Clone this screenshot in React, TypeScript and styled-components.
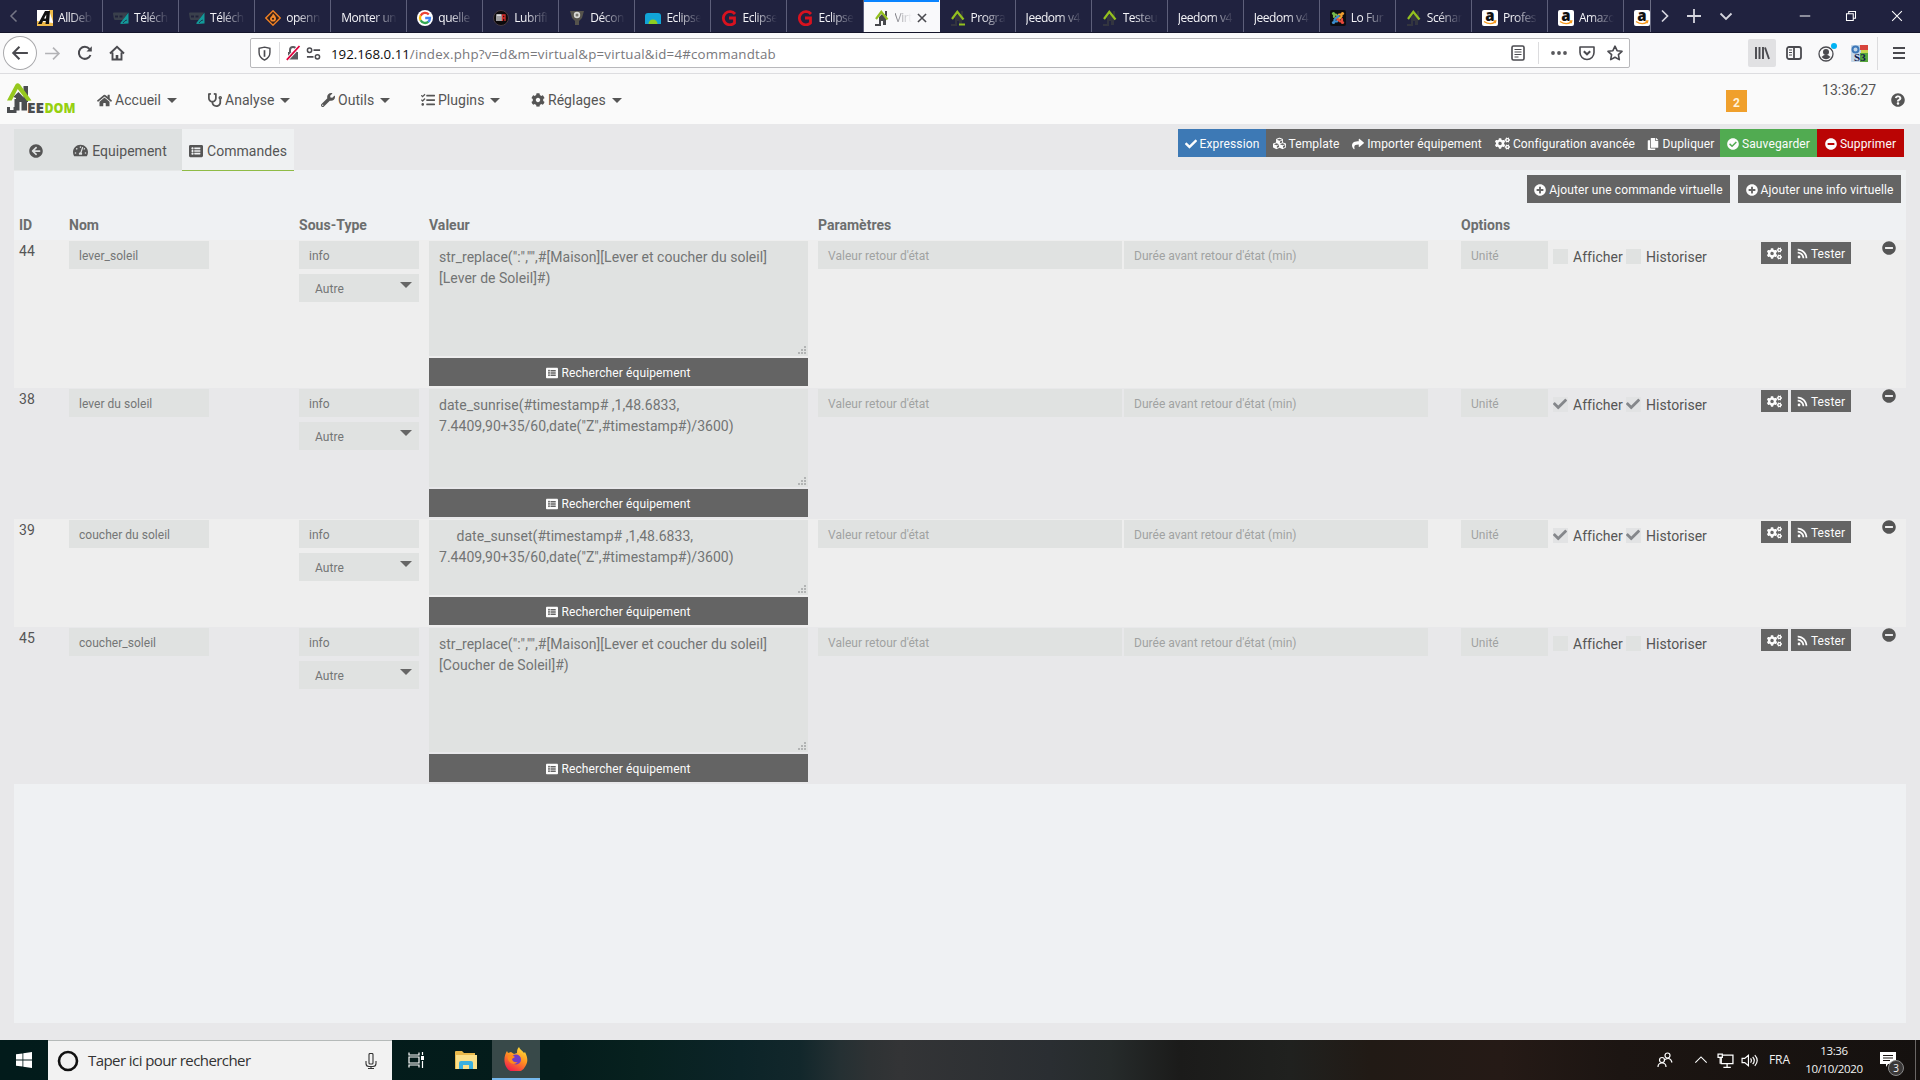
import React from "react";
import styled, { createGlobalStyle } from "styled-components";
import {
  FaHome, FaStethoscope, FaWrench, FaTasks, FaCog, FaTachometerAlt, FaListAlt, FaArrowCircleLeft,
  FaCheck, FaCubes, FaShare, FaCogs, FaCopy, FaCheckCircle, FaMinusCircle, FaPlusCircle, FaRss,
  FaQuestionCircle,
} from "react-icons/fa";

const Global = createGlobalStyle`
  * { box-sizing: border-box; }
  body { margin: 0; background: #e8e8ea; overflow: hidden; }
  svg { display: block; flex: none; }
`;

const ui = `"Open Sans", "Noto Sans", sans-serif`;

const Screen = styled.div`
  width: 1920px;
  height: 1080px;
  display: flex;
  flex-direction: column;
  overflow: hidden;
  font-family: Roboto, sans-serif;
  font-size: 14px;
  letter-spacing: 0.03px;
  color: #555;
`;

/* ---------- Browser tab strip ---------- */
const TabStrip = styled.div`
  height: 33px;
  flex: none;
  display: flex;
  background: #20223f;
  border-bottom: 1px solid #14152b;
  font: 12px ${ui};
  color: #f4f4f8;
`;
const Slot = styled.div<{ w: number; dim?: boolean }>`
  width: ${(p) => p.w}px;
  height: 100%;
  flex: none;
  display: flex;
  align-items: center;
  justify-content: center;
  opacity: ${(p) => (p.dim ? 0.45 : 1)};
`;
const TabList = styled.div`
  width: 1624px;
  flex: none;
  display: flex;
  overflow: hidden;
  border-right: 1px solid #6c6e85;
`;
const BrowserTab = styled.div<{ active?: boolean }>`
  width: 76.05px;
  height: 33px;
  flex: none;
  display: flex;
  align-items: center;
  padding: 2px ${(p) => (p.active ? 12 : 9)}px 0 10px;
  gap: 5px;
  border-right: 1px solid ${(p) => (p.active ? "#f9f9fb" : "#5d5f7a")};
  background: ${(p) => (p.active ? "#f9f9fb" : "transparent")};
  box-shadow: ${(p) => (p.active ? "inset 0 2px #0a84ff" : "none")};
  color: ${(p) => (p.active ? "#4a4a52" : "inherit")};
`;
const TabLabel = styled.span`
  flex: 1;
  min-width: 0;
  white-space: nowrap;
  letter-spacing: -0.45px;
  mask-image: linear-gradient(to right, #000 calc(100% - 24px), transparent);
`;
const Spacer = styled.div`
  flex: 1;
`;

/* ---------- Browser toolbar ---------- */
const NavBar = styled.div`
  height: 41px;
  flex: none;
  display: flex;
  align-items: center;
  padding-left: 3px;
  background: #f9f9fa;
  border-bottom: 1px solid #dddde0;
`;
const BackButton = styled.div`
  width: 34px;
  height: 34px;
  border-radius: 50%;
  border: 1px solid #a9a9ac;
  background: #fff;
  display: flex;
  align-items: center;
  justify-content: center;
`;
const AddressBar = styled.div`
  width: 1382px;
  height: 30px;
  margin-left: 117px;
  display: flex;
  align-items: center;
  background: #fff;
  border: 1px solid #b8b8bb;
  border-radius: 2px;
`;
const Divider = styled.div<{ h: number }>`
  width: 1px;
  height: ${(p) => p.h}px;
  background: #dcdcde;
`;
const Url = styled.div`
  margin-left: 10px;
  font: 13.3px ${ui};
  letter-spacing: 0.2px;
  color: #78787c;
  padding-top: 2px;
  b { font-weight: 400; color: #0c0c0d; letter-spacing: 0; }
`;
const LibraryButton = styled(Slot)`
  height: 28px;
  background: #e1e1e3;
  border-radius: 2px;
`;

/* ---------- Jeedom header ---------- */
const Header = styled.header`
  height: 50px;
  flex: none;
  display: flex;
  align-items: center;
  background: #fafafa;
  padding-left: 7px;
`;
const Menu = styled.nav`
  display: flex;
  margin-left: 21px;
`;
const MenuItem = styled.div<{ w: number }>`
  width: ${(p) => p.w}px;
  display: flex;
  align-items: center;
  gap: 3px;
  padding-top: 2px;
`;
const Caret = styled.i<{ size?: number }>`
  border: ${(p) => p.size ?? 5}px solid transparent;
  border-top: ${(p) => (p.size ?? 5) + 0.5}px solid currentColor;
  border-bottom: 0;
`;
const MenuCaret = styled(Caret)`
  margin-left: 3px;
`;
const Badge = styled.div`
  width: 21px;
  height: 22px;
  margin: 4px 75px 0 0;
  display: flex;
  align-items: center;
  justify-content: center;
  padding-top: 3px;
  background: #f0a02c;
  color: #fff3dc;
  font-size: 12px;
  font-weight: 700;
`;
const Clock = styled.div`
  width: 69px;
  margin-top: -18px;
`;
const HelpIcon = styled.div`
  margin: 2px 15px 0 0;
`;

/* ---------- Page ---------- */
const Page = styled.main`
  height: 916px;
  flex: none;
  padding: 5px 14px 17px;
  background: #e8e8ea;
`;
const PageTop = styled.div`
  display: flex;
  justify-content: space-between;
  height: 41px;
`;
const PageTabs = styled.div`
  display: flex;
  height: 42px;
`;
const PageTab = styled.div<{ w: number; active?: boolean }>`
  width: ${(p) => p.w}px;
  height: 42px;
  display: flex;
  align-items: center;
  justify-content: center;
  gap: 4px;
  padding-top: 2px;
  background: ${(p) => (p.active ? "#eff1f2" : "#dee1e1")};
  border-bottom: 1px solid ${(p) => (p.active ? "#8fbb45" : "#e6e8e8")};
  position: relative;
`;
const Actions = styled.div`
  display: flex;
  margin-right: 2px;
`;
const Button = styled.button<{ w?: number; h?: number; bg?: string }>`
  width: ${(p) => (p.w ? `${p.w}px` : "100%")};
  height: ${(p) => p.h ?? 28}px;
  border: 0;
  padding: 1px 0 0;
  display: flex;
  align-items: center;
  justify-content: center;
  gap: 3px;
  white-space: nowrap;
  background: ${(p) => p.bg ?? "#646464"};
  color: #fcfcfc;
  font: 400 12px Roboto, sans-serif;
  letter-spacing: 0.12px;
`;
const Panel = styled.section`
  height: 853px;
  background: #eff1f3;
`;
const AddBar = styled.div`
  display: flex;
  justify-content: flex-end;
  gap: 8px;
  height: 40px;
  padding: 5px 5px 0 0;
`;
const columns = "50px 230px 130px 389px 643px 300px 1fr";
const HeadRow = styled.div`
  display: grid;
  grid-template-columns: ${columns};
  height: 30px;
  line-height: 30px;
  padding-left: 5px;
  font-weight: 700;
  color: #6c6e6e;
`;
const Row = styled.div<{ h: number; alt?: boolean }>`
  display: grid;
  grid-template-columns: ${columns};
  height: ${(p) => p.h}px;
  padding: 1px 0 0 5px;
  background: ${(p) => (p.alt ? "#e8e8ea" : "#eeeeee")};
`;
const IdCell = styled.div`
  line-height: 20px;
`;
const Field = styled.div<{ w: number; muted?: boolean }>`
  width: ${(p) => p.w}px;
  height: 28px;
  padding: 2px 10px 0;
  line-height: 27px;
  font-size: 12px;
  background: #e0e2e1;
  color: ${(p) => (p.muted ? "#a0a2a2" : "#747676")};
`;
const SelectField = styled(Field)`
  display: flex;
  justify-content: space-between;
  margin-top: 5px;
  padding: 2px 7px 0 16px;
`;
const SelectCaret = styled(Caret)`
  margin-top: 6px;
  color: #666;
`;
const ValueCell = styled.div`
  width: 379px;
`;
const TextBox = styled.div<{ h: number }>`
  position: relative;
  height: ${(p) => p.h}px;
  margin-bottom: 2px;
  padding: 6px 10px;
  line-height: 21px;
  white-space: pre-wrap;
  background: #e0e2e1;
  color: #727474;
`;
const Grip = styled.svg`
  position: absolute;
  right: 1px;
  bottom: 1px;
`;
const Params = styled.div`
  display: flex;
  gap: 2px;
`;
const Options = styled.div`
  display: flex;
`;
const CheckBox = styled.div<{ on?: boolean; gap: number }>`
  width: 15px;
  height: 15px;
  margin: 8px 5px 0 ${(p) => p.gap}px;
  background: ${(p) => (p.on ? "#e2e3e4" : "#e0e2e1")};
  color: #85878b;
`;
const CheckLabel = styled.div<{ w: number }>`
  width: ${(p) => p.w}px;
  line-height: 32px;
`;
const RowActions = styled.div`
  display: flex;
  align-items: flex-start;
  gap: 3px;
  & > button { margin-top: 1px; }
  & > svg { margin-left: 28px; }
`;

/* ---------- Taskbar ---------- */
const Taskbar = styled.footer`
  height: 40px;
  flex: none;
  display: flex;
  align-items: center;
  color: #f2f2f2;
  background: linear-gradient(to right, #021b1b 0, #041c1b 560px, #07211f 640px, #0c2428 740px, #12272b 800px, #253033 840px, #2e3234 870px, #333436 900px, #2a2e32 1050px, #262b2b 1110px, #1b1b1a 1180px, #20211f 1290px, #211a15 1370px, #251a16 1500px, #1c1512 1620px, #15110f 1920px);
  font: 12px ${ui};
`;
const Search = styled.div`
  width: 344px;
  height: 40px;
  display: flex;
  align-items: center;
  background: #f2f2f2;
  border-top: 1px solid #b5bab9;
  color: #333;
  font-size: 15px;
`;
const SearchText = styled.div`
  width: 269px;
  letter-spacing: -0.57px;
  margin-top: -2px;
`;
const AppButton = styled(Slot)`
  background: #384949;
  border-bottom: 2px solid #76b9ed;
`;
const Lang = styled.div`
  width: 34px;
  padding-left: 1px;
  letter-spacing: -0.1px;
  margin-top: -2px;
`;
const DateTime = styled.div`
  width: 64px;
  text-align: center;
  font-size: 11.5px;
  line-height: 18px;
  letter-spacing: -0.35px;
  margin-top: -1px;
`;
const Notify = styled.div`
  width: 49px;
  height: 40px;
  position: relative;
  padding: 12px 0 0 14px;
`;
const NotifyCount = styled.div`
  position: absolute;
  left: 22px;
  top: 20px;
  width: 16px;
  height: 16px;
  border-radius: 50%;
  border: 1px solid #8a8a8a;
  background: #3a3838;
  font-size: 10px;
  line-height: 14px;
  text-align: center;
`;
const ShowDesktop = styled.div`
  width: 5px;
  height: 40px;
  border-left: 1px solid #6a6664;
`;

/* ---------- Favicons ---------- */
const AllDebrid = () => (
  <svg width="16" height="16" viewBox="0 0 16 16">
    <rect width="16" height="16" fill="#fff" /><path d="M0 16V11l16 2v3zM12 0h4v12z" fill="#f0bb4a" />
    <path d="M1 14L8 1h5l-1 13H8.500l.3-3H6l-1.300 3zM7 8.500h2l.3-4z" fill="#111" />
  </svg>
);
const Dl = () => (
  <svg width="16" height="16" viewBox="0 0 16 16">
    <path d="M0 3.500q0-1 1-1h14l-5 7.500H2q-1 0-1.300-2z" fill="#3a404c" />
    <path d="M2 5.500h3v2H2zM6.500 5.500h3v2h-3z" fill="#20223a" />
    <path d="M15.500 2.500v11l-8 .5q-.5-1.500 1-2.500z" fill="#139a9a" />
    <path d="M10 13q2-3 4-3" fill="none" stroke="#20223f" strokeWidth=".8" />
  </svg>
);
const OpenM = () => (
  <svg width="16" height="16" viewBox="0 0 16 16">
    <path d="M8 .8L15.200 8 8 15.200.8 8z" fill="#33201c" stroke="#f08024" strokeWidth="1.400" />
    <path d="M8 3.500c2 2 3 3.500 3 5.200A2.900 2.900 0 018 11.500 2.900 2.900 0 015 8.700C5 7 7.500 6 8 3.500z" fill="#f58a2c" />
    <circle cx="8" cy="8.800" r="1.100" fill="#33201c" />
  </svg>
);
const Google = () => (
  <svg width="16" height="16" viewBox="0 0 16 16">
    <circle cx="8" cy="8" r="8" fill="#fff" />
    <g fill="none" strokeWidth="2.300">
      <path d="M11.800 4.600A5 5 0 003.600 5.700" stroke="#ea4335" /><path d="M3.600 5.600a5 5 0 000 4.800" stroke="#fbbc05" />
      <path d="M3.600 10.300a5 5 0 007.900 1.300" stroke="#34a853" /><path d="M11.300 11.800A5 5 0 0013 8H8.200" stroke="#4285f4" />
    </g>
  </svg>
);
const Lub = () => (
  <svg width="16" height="16" viewBox="0 0 16 16">
    <circle cx="8" cy="8" r="7.500" fill="#0c0a0c" stroke="#463a42" />
    <path d="M4 11V5h4v6M6 5v6" stroke="#eee" strokeWidth="1.300" fill="none" /><path d="M9.500 11V5H12v6M9.500 8H12" stroke="#d9302c" strokeWidth="1.300" fill="none" />
  </svg>
);
const Shield = () => (
  <svg width="16" height="16" viewBox="0 0 16 16">
    <path d="M1 1h14l-2 7-3 3v4H6v-4L3 8z" fill="#55534c" /><circle cx="8" cy="5" r="3.200" fill="#d8d8d4" /><circle cx="8" cy="5" r="1.500" fill="#77756d" />
  </svg>
);
const Arch = () => (
  <svg width="16" height="16" viewBox="0 0 16 16">
    <path d="M0 14V6q0-3 3-3h10q3 0 3 3v8z" fill="#11a5d8" /><path d="M3.500 14a4.500 4.500 0 019 0z" fill="#8fce22" />
  </svg>
);
const GRed = () => (
  <svg width="16" height="16" viewBox="0 0 16 16">
    <path d="M14 4A6.600 6.600 0 1013.500 13V8H8" fill="none" stroke="#d8121f" strokeWidth="2.800" />
    <path d="M12 5a4 4 0 00-6 0" fill="none" stroke="#20223f" strokeWidth=".6" />
  </svg>
);
const House = ({ bright, dash }: { bright?: boolean; dash?: boolean }) => (
  <svg width="16" height="16" viewBox="0 0 16 16">
    <path d="M5 7l3-3 4 4v7H9v-4H7v5H1v-2h4z" fill={bright ? "#47484c" : "#33353f"} />
    <path d="M11 1h2v6l-2-2z" fill={bright ? "#47484c" : "#33353f"} />
    <path d="M2 9L7.300 1.800 13.500 9.500" fill="none" stroke="#93c01f" strokeWidth="2.200" />
    {dash && <path d="M9 14.500h6" stroke="#93c01f" strokeWidth="2" />}
  </svg>
);
const Joomla = () => (
  <svg width="16" height="16" viewBox="0 0 16 16">
    <rect width="16" height="16" rx="2" fill="#0d0d12" />
    <g fill="none" strokeWidth="2.200" strokeLinecap="round">
      <path d="M4 7V5.500q1.500-2 3 0L10 8.500" stroke="#78b94a" />
      <path d="M9 4.500h1.500q2 1 .5 2.500L7.500 10" stroke="#f3a030" />
      <path d="M12 9v1.500q-1.500 2-3 0L6 7.500" stroke="#e84a3c" />
      <path d="M7 11.500H5.500q-2-1-.5-2.500L8.500 6" stroke="#3d8ed0" />
    </g>
    <circle cx="3.500" cy="3.500" r="1.600" fill="#78b94a" /><circle cx="12.500" cy="3.500" r="1.600" fill="#f3a030" />
    <circle cx="12.500" cy="12.500" r="1.600" fill="#e84a3c" /><circle cx="3.500" cy="12.500" r="1.600" fill="#3d8ed0" />
  </svg>
);
const AText = styled.text`
  font: 800 15px "Open Sans", sans-serif;
`;
const Amazon = () => (
  <svg width="16" height="16" viewBox="0 0 16 16">
    <rect width="16" height="16" rx="2" fill="#fff" />
    <AText x="3.300" y="10.500" fill="#111">a</AText>
    <path d="M2 11.500q6 4 11 .6M11.500 11h2.300l-.6 2.200" fill="none" stroke="#f79a1e" strokeWidth="1.300" />
  </svg>
);

const tabs: { label: string; icon?: React.ReactNode; active?: boolean }[] = [
  { label: "AllDeb", icon: <AllDebrid /> },
  { label: "Téléch", icon: <Dl /> },
  { label: "Téléch", icon: <Dl /> },
  { label: "openn", icon: <OpenM /> },
  { label: "Monter un" },
  { label: "quelle", icon: <Google /> },
  { label: "Lubrifi", icon: <Lub /> },
  { label: "Décon", icon: <Shield /> },
  { label: "Eclipse", icon: <Arch /> },
  { label: "Eclipse", icon: <GRed /> },
  { label: "Eclipse", icon: <GRed /> },
  { label: "Virt", icon: <House bright />, active: true },
  { label: "Progra", icon: <House dash /> },
  { label: "Jeedom v4" },
  { label: "Testeu", icon: <House /> },
  { label: "Jeedom v4" },
  { label: "Jeedom v4" },
  { label: "Lo Fur", icon: <Joomla /> },
  { label: "Scénar", icon: <House /> },
  { label: "Profes", icon: <Amazon /> },
  { label: "Amazo", icon: <Amazon /> },
  { label: "", icon: <Amazon /> },
];

/* Line icon with a shared stroke setup */
const Line = ({ s = 16, w = 1.5, c = "#4a4a4f", children }: { s?: number; w?: number; c?: string; children: React.ReactNode }) => (
  <svg width={s} height={s} viewBox="0 0 16 16" fill="none" stroke={c} strokeWidth={w}>{children}</svg>
);

const LogoText = styled.text`
  font: 800 14px "Open Sans", sans-serif;
  letter-spacing: 0;
`;
const Logo = () => (
  <svg width="69" height="32" viewBox="0 0 69 32">
    <path d="M16.500 3H21v16h-4.500z" fill="#4b4d50" />
    <path d="M6 14l5.500-5 8.500 9v9.500h-5.500V19h-2v8.500H9V15z" fill="#4b4d50" />
    <path d="M1.500 24v4.500H8V16" fill="none" stroke="#4b4d50" strokeWidth="3" />
    <path d="M6 14.500h1.500V24H6z" fill="#fafafa" />
    <path d="M0 17.500L8.500 1.500q2-2.500 4.500 0L24.500 17.500l-4.500.5-9.300-12-6 11.500z" fill="#96c81e" />
    <LogoText x="20" y="29.500" fill="#4b4d50" textLength="17" lengthAdjust="spacingAndGlyphs">EE</LogoText>
    <LogoText x="37.500" y="29.500" fill="#96d010" textLength="31" lengthAdjust="spacingAndGlyphs">DOM</LogoText>
  </svg>
);

const menu = [
  { label: "Accueil", icon: <FaHome size={15} />, w: 111 },
  { label: "Analyse", icon: <FaStethoscope size={14} />, w: 113 },
  { label: "Outils", icon: <FaWrench size={14} />, w: 100 },
  { label: "Plugins", icon: <FaTasks size={14} />, w: 110 },
  { label: "Réglages", icon: <FaCog size={14} />, w: 110 },
];

const actions = [
  { label: "Expression", icon: <FaCheck size={12} />, w: 88, bg: "#3d79b5" },
  { label: "Template", icon: <FaCubes size={13} />, w: 80 },
  { label: "Importer équipement", icon: <FaShare size={12} />, w: 142 },
  { label: "Configuration avancée", icon: <FaCogs size={15} />, w: 154 },
  { label: "Dupliquer", icon: <FaCopy size={12} />, w: 78 },
  { label: "Sauvegarder", icon: <FaCheckCircle size={12} />, w: 97, bg: "#51ab51" },
  { label: "Supprimer", icon: <FaMinusCircle size={12} />, w: 87, bg: "#ba0404" },
];

const rows = [
  { id: 44, name: "lever_soleil", h: 148, box: 115, on: false, value: `str_replace(":","",#[Maison][Lever et coucher du soleil]\n[Lever de Soleil]#)` },
  { id: 38, name: "lever du soleil", h: 131, box: 98, on: true, value: `date_sunrise(#timestamp# ,1,48.6833,\n7.4409,90+35/60,date("Z",#timestamp#)/3600)` },
  { id: 39, name: "coucher du soleil", h: 108, box: 75, on: true, value: `     date_sunset(#timestamp# ,1,48.6833,\n7.4409,90+35/60,date("Z",#timestamp#)/3600)` },
  { id: 45, name: "coucher_soleil", h: 157, box: 124, on: false, value: `str_replace(":","",#[Maison][Lever et coucher du soleil]\n[Coucher de Soleil]#)` },
];

const CommandRow = ({ row, alt }: { row: (typeof rows)[number]; alt: boolean }) => (
  <Row h={row.h} alt={alt}>
    <IdCell>{row.id}</IdCell>
    <div><Field w={140}>{row.name}</Field></div>
    <div>
      <Field w={120}>info</Field>
      <SelectField w={120}>Autre<SelectCaret size={6} /></SelectField>
    </div>
    <ValueCell>
      <TextBox h={row.box}>
        {row.value}
        <Grip width="9" height="9" viewBox="0 0 9 9" fill="#b2b4b4">
          <path d="M6 0h2v2H6zM3 3h2v2H3zM6 3h2v2H6zM0 6h2v2H0zM3 6h2v2H3zM6 6h2v2H6z" />
        </Grip>
      </TextBox>
      <Button><FaListAlt size={12} />Rechercher équipement</Button>
    </ValueCell>
    <Params>
      <Field w={304} muted>Valeur retour d'état</Field>
      <Field w={304} muted>Durée avant retour d'état (min)</Field>
    </Params>
    <Options>
      <Field w={87} muted>Unité</Field>
      <CheckBox on={row.on} gap={5}>{row.on && <FaCheck size={14} />}</CheckBox>
      <CheckLabel w={53}>Afficher</CheckLabel>
      <CheckBox on={row.on} gap={0}>{row.on && <FaCheck size={14} />}</CheckBox>
      <CheckLabel w={70}>Historiser</CheckLabel>
    </Options>
    <RowActions>
      <Button w={27} h={22}><FaCogs size={15} /></Button>
      <Button w={60} h={22}><FaRss size={11} />Tester</Button>
      <FaMinusCircle size={14} />
    </RowActions>
  </Row>
);

const App = () => (
  <Screen>
    <Global />
    <TabStrip>
      <Slot w={27} dim><Line c="#ddd"><path d="M10.500 2.500L5 8l5.500 5.500" /></Line></Slot>
      <TabList>
        {tabs.map((t, i) => (
          <BrowserTab key={i} active={t.active}>
            {t.icon}
            <TabLabel>{t.label}</TabLabel>
            {t.active && <Line s={10} w={2.500}><path d="M1.500 1.500l13 13M14.500 1.500l-13 13" /></Line>}
          </BrowserTab>
        ))}
      </TabList>
      <Slot w={27}><Line c="#d5d5de" w={1.700}><path d="M5 2.500L10.500 8 5 13.500" /></Line></Slot>
      <Slot w={32}><Line c="#d5d5de" w={1.800}><path d="M8 1v14M1 8h14" /></Line></Slot>
      <Slot w={32}><Line c="#d5d5de" w={1.800}><path d="M2.500 5.500L8 11l5.500-5.500" /></Line></Slot>
      <Spacer />
      <Slot w={46}><Line c="#fff" w={1} s={12}><path d="M1 8h14" strokeWidth="1.300" /></Line></Slot>
      <Slot w={46}><Line c="#fff" w={1.400} s={12}><path d="M2 5h9v9H2zM5 5V2h9v9h-3" /></Line></Slot>
      <Slot w={46}><Line c="#fff" w={1.400} s={12}><path d="M1.500 1.500l13 13M14.500 1.500l-13 13" /></Line></Slot>
    </TabStrip>

    <NavBar>
      <BackButton><Line s={18} w={1.800}><path d="M15 8H2M7.500 2.500L2 8l5.500 5.500" /></Line></BackButton>
      <Slot w={32}><Line s={17} w={1.600} c="#b3b3b6"><path d="M1 8h13M8.500 2.500L14 8l-5.500 5.500" /></Line></Slot>
      <Slot w={32}><Line w={2}><path d="M13.500 10A6 6 0 1112.500 4" /><path d="M14.800 1.200v5.300H9.500z" fill="#4a4a4f" stroke="none" /></Line></Slot>
      <Slot w={32}><Line w={1.900}><path d="M1 8.500L8 1.800l7 6.700M3.500 7.500V14.500h9V7.500" /><path d="M8 14v-4" strokeWidth="2.600" /></Line></Slot>
      <AddressBar>
        <Slot w={28}><Line s={15} w={1.500}><path d="M8 1.200l5.800 1.300V7c0 4-2.200 6.400-5.800 8C4.400 13.400 2.200 11 2.200 7V2.500z" /><path d="M8 4.500v7" strokeWidth="1.800" /></Line></Slot>
        <Divider h={22} />
        <Slot w={27}>
          <Line w={1.600}><path d="M5 7V5a3 3 0 016 0v2" stroke="#5a5a5f" strokeWidth="2" /><path d="M3 7h10v7.500H3z" fill="#5a5a5f" stroke="none" /><path d="M1.800 14.800L14.500 1" stroke="#fff" strokeWidth="3.500" /><path d="M1.800 14.800L14.500 1" stroke="#e0003c" strokeWidth="1.800" /></Line>
        </Slot>
        <Slot w={14}><Line s={15} w={1.600}><circle cx="3.800" cy="4.500" r="2.300" /><path d="M8 4.500h7M1 11.500h7" strokeWidth="1.900" /><circle cx="12.200" cy="11.500" r="2.300" /></Line></Slot>
        <Url><b>192.168.0.11</b>/index.php?v=d&amp;m=virtual&amp;p=virtual&amp;id=4#commandtab</Url>
        <Spacer />
        <Slot w={28}><Line w={1.600}><rect x="2" y="1" width="12" height="14" rx="1.500" /><path d="M4.500 4.500h7M4.500 7h7M4.500 9.500h7M4.500 12h4" strokeWidth="1.100" /></Line></Slot>
        <Slot w={6} />
        <Divider h={22} />
        <Slot w={6} />
        <Slot w={28}><Line><g fill="#58585c" stroke="none"><circle cx="2" cy="8" r="1.900" /><circle cx="8" cy="8" r="1.900" /><circle cx="14" cy="8" r="1.900" /></g></Line></Slot>
        <Slot w={28}><Line w={1.600}><path d="M1 2h14v5.500a7 7 0 01-14 0z" strokeLinejoin="round" /><path d="M4.800 6.200L8 9.300l3.200-3.100" strokeWidth="2" /></Line></Slot>
        <Slot w={28}><Line w={1.600}><path d="M8 1.200l2.100 4.500 4.900.6-3.600 3.400.9 4.900L8 12.200l-4.300 2.400.9-4.900L1 6.300l4.900-.6z" strokeLinejoin="round" /></Line></Slot>
      </AddressBar>
      <Slot w={118} />
      <LibraryButton w={28}><Line w={1.900}><path d="M2 2v12M5.500 2v12M9 2v12M11 2.500L15 14" /></Line></LibraryButton>
      <Slot w={36}><Line w={1.800}><rect x="1" y="2" width="14" height="12" rx="2" /><path d="M8 2v12" /><path d="M3 5h3M3 7.500h3M3 10h3" strokeWidth="1" /></Line></Slot>
      <Slot w={30}>
        <svg width="20" height="20" viewBox="0 0 20 20"><circle cx="9" cy="11" r="7" fill="none" stroke="#4a4a4f" strokeWidth="1.300" /><circle cx="9" cy="9" r="3" fill="#4a4a4f" /><path d="M4.500 14q4.500-4.500 9 0-4.500 4.500-9 0z" fill="#4a4a4f" /><circle cx="17" cy="3" r="3" fill="#00b3f4" /></svg>
      </Slot>
      <Slot w={35}>
        <svg width="17" height="17" viewBox="0 0 17 17">
          <rect width="17" height="17" rx="1" fill="#c3d6e8" /><path d="M9 0h8v5H9z" fill="#d8443c" /><path d="M10 5h7v4h-7z" fill="#c8d850" /><path d="M9 8h8v9H9z" fill="#58a63c" /><circle cx="4.500" cy="4.500" r="3" fill="none" stroke="#3e78b8" strokeWidth="2" />
          <text x="3" y="16" fontSize="11" fontWeight="700" fontFamily="Liberation Serif, serif" fill="#10184c">S3</text>
        </svg>
      </Slot>
      <Divider h={33} />
      <Slot w={42}><Line w={1.900}><path d="M2 3h12M2 8h12M2 13h12" /></Line></Slot>
    </NavBar>

    <Header>
      <Logo />
      <Menu>
        {menu.map((m) => (
          <MenuItem key={m.label} w={m.w}>{m.icon}<span>{m.label}</span><MenuCaret /></MenuItem>
        ))}
      </Menu>
      <Spacer />
      <Badge>2</Badge>
      <Clock>13:36:27</Clock>
      <HelpIcon><FaQuestionCircle size={14} /></HelpIcon>
    </Header>

    <Page>
      <PageTop>
        <PageTabs>
          <PageTab w={44}><FaArrowCircleLeft size={14} /></PageTab>
          <PageTab w={124}><FaTachometerAlt size={15} />Equipement</PageTab>
          <PageTab w={112} active><FaListAlt size={14} />Commandes</PageTab>
        </PageTabs>
        <Actions>
          {actions.map((a) => <Button key={a.label} w={a.w} bg={a.bg}>{a.icon}{a.label}</Button>)}
        </Actions>
      </PageTop>
      <Panel>
        <AddBar>
          <Button w={203}><FaPlusCircle size={12} />Ajouter une commande virtuelle</Button>
          <Button w={163}><FaPlusCircle size={12} />Ajouter une info virtuelle</Button>
        </AddBar>
        <HeadRow>
          <span>ID</span><span>Nom</span><span>Sous-Type</span><span>Valeur</span><span>Paramètres</span><span>Options</span>
        </HeadRow>
        {rows.map((r, i) => <CommandRow key={r.id} row={r} alt={i % 2 === 1} />)}
      </Panel>
    </Page>

    <Taskbar>
      <Slot w={48}>
        <svg width="16" height="16" viewBox="0 0 16 16" fill="#fff"><path d="M0 2.300L6.500 1.400v6.200H0zM7.300 1.300L16 0v7.600H7.300zM0 8.400h6.500v6.200L0 13.700zM7.300 8.400H16V16l-8.700-1.300z" /></svg>
      </Slot>
      <Search>
        <Slot w={40}><svg width="22" height="22" viewBox="0 0 22 22"><circle cx="11" cy="11" r="9" fill="none" stroke="#111" strokeWidth="2.600" /></svg></Slot>
        <SearchText>Taper ici pour rechercher</SearchText>
        <Slot w={28}><Line c="#333" w={1.100}><path d="M6 1.500q0-1 1-1h2q1 0 1 1V10q0 1-1 1H7q-1 0-1-1zM3 8v2.500q0 3 3 3h4q3 0 3-3V8M8 13.500v2M5 15.500h6" /></Line></Slot>
      </Search>
      <Slot w={48}><Line c="#fff" w={1.200}><path d="M1 .5v2.500h10V.5M1 15.500V13h10v2.500M1 5h10v6H1zM14.500 0v3M14.500 9v7" /><path d="M13 4h3v4h-3z" fill="#fff" stroke="none" /></Line></Slot>
      <Slot w={52}>
        <svg width="22" height="18" viewBox="0 0 22 18"><path d="M0 1q0-1 1-1h6l2 2h11v16H0z" fill="#e9b94c" /><path d="M1 4h21v14H1z" fill="#fbe08a" /><path d="M4 18v-6q0-2 2-2h10q2 0 2 2v6h-4v-4H8v4z" fill="#3bb0e0" /></svg>
      </Slot>
      <AppButton w={48}>
        <svg width="24" height="24" viewBox="0 0 24 24">
          <defs>
            <linearGradient id="fox" x1=".8" y1="0" x2=".3" y2="1"><stop offset="0" stopColor="#ffe23c" /><stop offset=".45" stopColor="#ff9420" /><stop offset="1" stopColor="#f0184e" /></linearGradient>
          </defs>
          <path d="M15 0c1 3 3 3 5 6l1-1c3 6 3 10 .5 14A11 11 0 011 17C-.5 12 1 7 3 4l1 2 3-1 3 2 3-1c0-2 0-4 2-6z" fill="url(#fox)" />
          <circle cx="12" cy="12.500" r="5" fill="#6f3cc8" /><path d="M4 9q4-2 7 1l-3 2q1 4 6 3-5 4-9-.5Q3 12 4 9z" fill="#ff8a1c" />
        </svg>
      </AppButton>
      <Spacer />
      <Slot w={36}><Line c="#fff" w={1.200}><circle cx="10.500" cy="3.500" r="2.500" /><circle cx="5" cy="8" r="2.500" /><path d="M1 15q0-4 4-4t4 4M8 7.500q5.500-3 7 3" /></Line></Slot>
      <Slot w={36}><Line c="#fff" w={1.300} s={14}><path d="M1.500 11L8 4.500 14.500 11" /></Line></Slot>
      <Slot w={12}><Line c="#fff" w={1.200} s={17}><path d="M4 3h11v8H4zM9.500 11v3M6 14.500h7" /><path d="M1 2h4v3H1z" fill="#1a1412" /><path d="M3 5v6" /></Line></Slot>
      <Slot w={37}><Line c="#fff" w={1.100} s={17}><path d="M1 6h2.500L7 3v10L3.500 10H1zM9 6q1.500 2 0 4M11 4.500q3 3.500 0 7M13 3q4.500 5 0 10" /></Line></Slot>
      <Lang>FRA</Lang>
      <DateTime>13:36<br />10/10/2020</DateTime>
      <Notify>
        <svg width="16" height="16" viewBox="0 0 16 16"><path d="M0 0h16v12H8l-2 3v-3H0z" fill="#fff" /><path d="M3 3.500h10M3 6h10M3 8.500h7" stroke="#1a1412" strokeWidth="1.100" /></svg>
        <NotifyCount>3</NotifyCount>
      </Notify>
      <ShowDesktop />
    </Taskbar>
  </Screen>
);

export default App;
